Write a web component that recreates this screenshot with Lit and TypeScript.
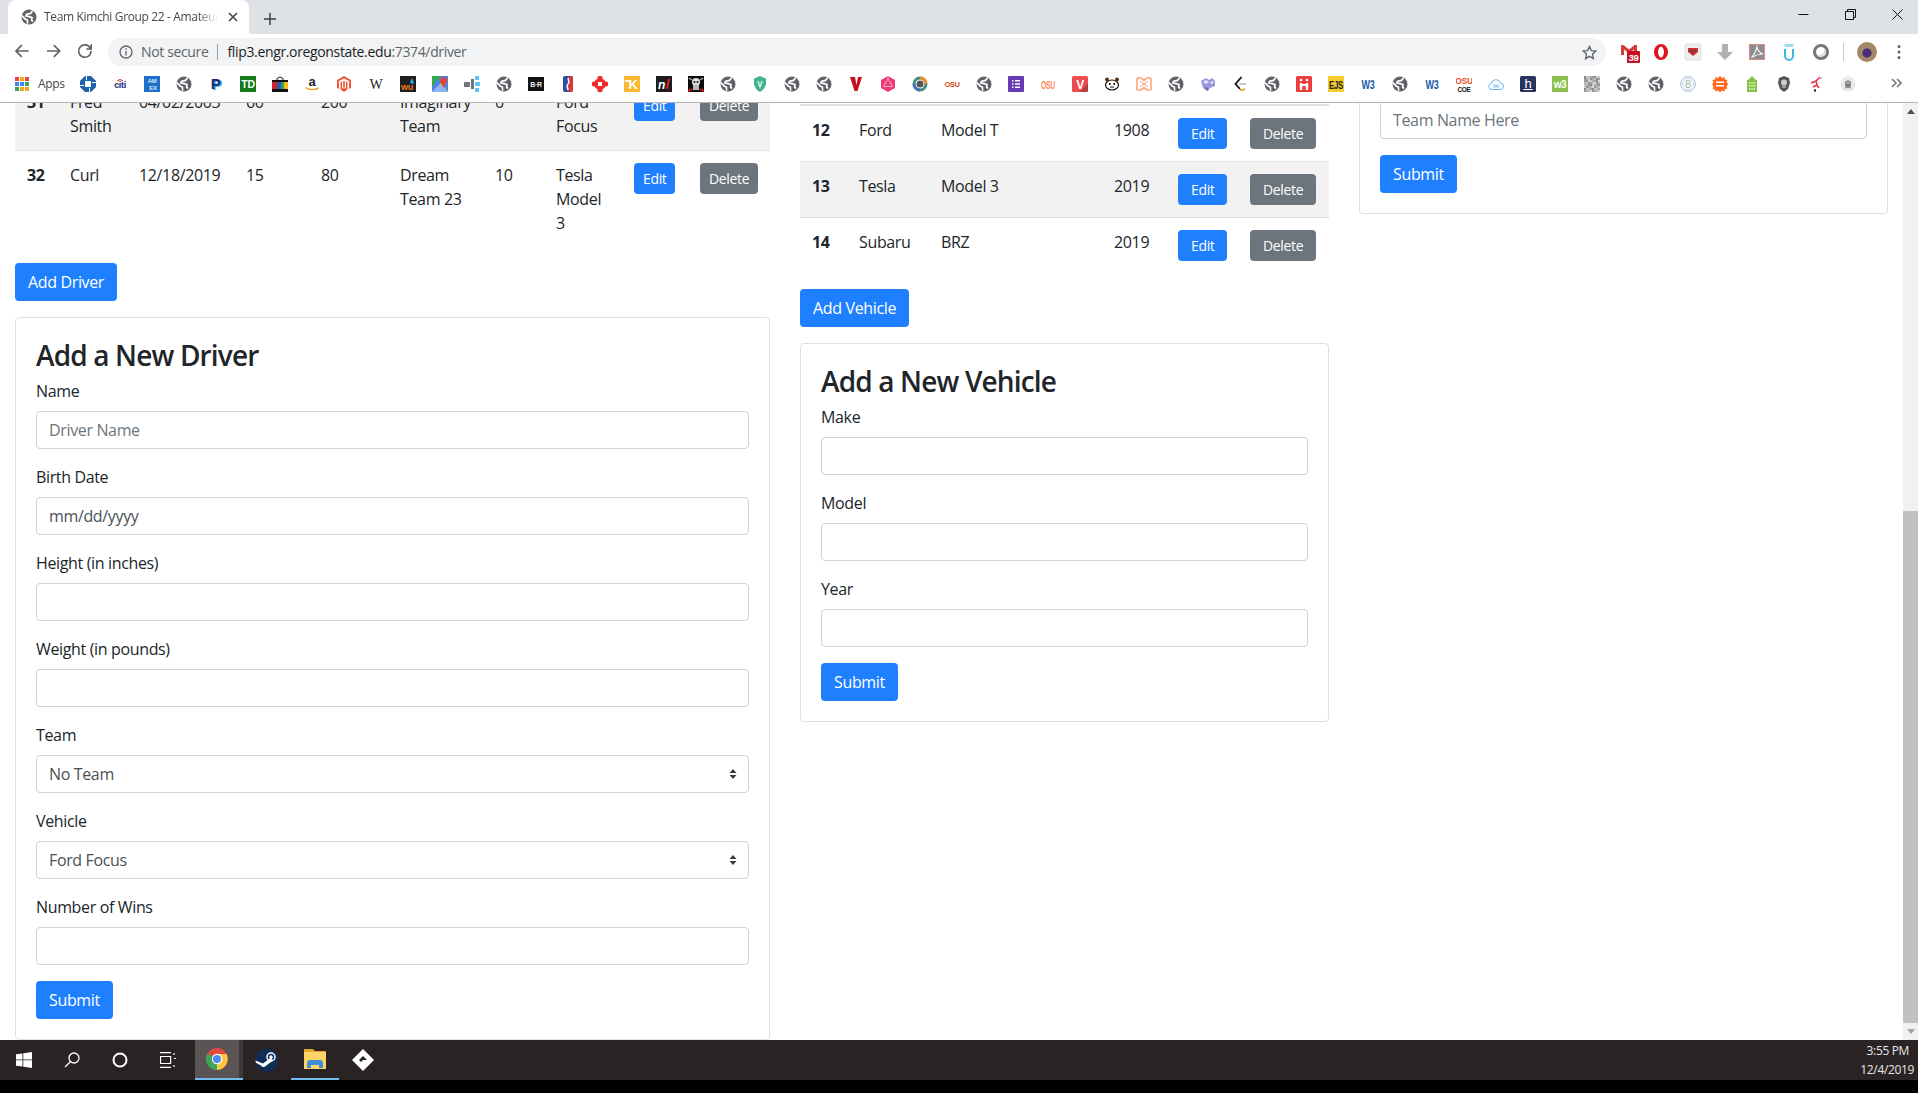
import { LitElement, html, css, svg } from "lit";
import { customElement } from "lit/decorators.js";

const GLOBE = svg`<circle cx="8" cy="8" r="7.5" fill="#5f6368"/><path d="M11.5 1.8 9.6 4.4 5.6 5.2 4.9 6.9 8.2 7.6 11 8.5 10.6 11.2 12 12.6" fill="none" stroke="#fff" stroke-width="1.7"/><path d="M.8 6.6 4.4 10.2 6.4 11 6.6 14.6" fill="none" stroke="#fff" stroke-width="1.7"/>`;

const label = (t: string, x: number, y: number, size: number, fill: string, weight = 700, family = "Liberation Sans") =>
  svg`<text x=${x} y=${y} font-size=${size} fill=${fill} font-weight=${weight} font-family=${family} text-anchor="middle">${t}</text>`;

// grey noise square of the one qr-like favicon
const noise = () => {
  const out = [];
  for (let y = 0; y < 16; y += 2) {
    for (let x = 0; x < 16; x += 2) {
      const v = 130 + ((x * 37 + y * 53 + x * y * 11) % 90);
      out.push(svg`<rect x=${x} y=${y} width="2" height="2" fill="rgb(${v},${v},${v})"/>`);
    }
  }
  return out;
};

const FAVICONS = [
  svg`<path fill="#1c62ad" d="M5 0h6l5 5v6l-5 5H5l-5-5V5z"/><path fill="#fff" d="M5 5h6v6H5zM6 0h1v4H6zM12 6h4v1h-4zM9 12h1v4H9zM0 9h4v1H0z"/>`,
  svg`${label("citi", 8, 12, 9, "#13267b")}<path d="M5 5q3-3 6 0" fill="none" stroke="#d8262c"/>`,
  svg`<rect width="16" height="16" fill="#1d6fc9"/>${label("AM", 8, 7, 6, "#d5e6f7")}${label("EX", 9, 14, 6, "#d5e6f7")}`,
  GLOBE,
  svg`${label("P", 9, 14, 15, "#2a9bdc", 700, "Liberation Sans")}${label("P", 7.5, 13, 15, "#14306f")}`,
  svg`<rect width="16" height="16" fill="#137a1c"/>${label("TD", 8, 12, 10.5, "#fff")}`,
  svg`<path d="M5 4V2.5Q8-.5 11 2.5V4" fill="none" stroke="#111"/><rect y="4" width="16" height="12" fill="#111"/><rect x="0" y="6" width="5" height="7" fill="#d9202e"/><rect x="5" y="6" width="4" height="7" fill="#1b5fb8"/><rect x="9" y="6" width="3" height="7" fill="#3c9e48"/><rect x="12" y="6" width="4" height="7" fill="#f3c11b"/>`,
  svg`${label("a", 8, 10, 13, "#222")}<path d="M1.5 11.5q6 4 13 .5" fill="none" stroke="#f29a1e" stroke-width="1.4"/>`,
  svg`<path fill="#ed5a3c" d="M8 0l7 4v8l-2 1V5L8 2.5 3 5v8l-2-1V4z"/><path fill="#ed5a3c" d="M4.5 6 6 5.2V12l1.2 1V5l.8-.4.8.4V13l1.2-1V5.2l1.5.8v7.4L8 16l-3.500-2.600z"/>`,
  svg`${label("W", 8, 13, 14, "#222", 400, "Liberation Serif")}`,
  svg`<rect width="16" height="16" fill="#1f1f1f"/>${label("wu", 7, 14, 9, "#ef7a1a")}<path fill="#2b9be0" d="M12 2l2 4a2 2 0 1 1-4 0z"/>`,
  svg`<rect width="16" height="16" fill="#4a85ec"/><path fill="#34a853" d="M0 0h9L0 11z"/><path fill="#fbc02d" d="M0 16l9-9 7 9z"/><path fill="#8ab4f8" d="M0 16 8 8l8 8z"/><circle cx="11.500" cy="4.500" r="3.500" fill="#e0463a"/><path fill="#e0463a" d="M8.500 6l3 6 3-6z"/>`,
  svg`<path fill="#6f7478" d="M0 6h6v5H0zM7 3h3v10H7z"/><path fill="#5cc6f3" d="M11 0h4v4h-4zM11 6h5v4h-5zM11 12h4v4h-4z"/>`,
  GLOBE,
  svg`<rect y="1" width="16" height="14" fill="#111"/>${label("B·R", 8, 11, 7, "#eee")}`,
  svg`<rect x="3" y="0" width="10" height="16" rx="2" fill="#2a4fa2"/><rect x="8" y="0" width="5" height="16" rx="2" fill="#d8343c"/><path d="M8 2l1 4-2 4 1 4" fill="none" stroke="#fff" stroke-width="1.500"/>`,
  svg`<g fill="#ee2b2b"><rect x="5.500" y="0" width="5" height="5" rx="1.500"/><rect x="5.500" y="11" width="5" height="5" rx="1.500"/><rect x="0" y="5.500" width="5" height="5" rx="1.500"/><rect x="11" y="5.500" width="5" height="5" rx="1.500"/><rect x="3" y="3" width="10" height="10" rx="3"/></g><rect x="6" y="6" width="4" height="4" fill="#fff"/>`,
  svg`<rect width="16" height="16" fill="#fbb72f"/>${label("K", 9, 13, 13, "#fff")}<rect x="1" y="4" width="6" height="1.800" fill="#fff"/>`,
  svg`<rect width="16" height="16" fill="#1d1d1d"/><text x="2" y="13" font-size="12" font-weight="700" font-style="italic" fill="#fff" font-family="Liberation Sans">n</text><path d="M13 3l-2 10" stroke="#d9252b" stroke-width="2"/>`,
  svg`<rect width="16" height="16" fill="#0c0c0c"/><circle cx="8" cy="6" r="4" fill="#ddd"/><rect x="5" y="9" width="6" height="5" fill="#bbb"/><circle cx="6.500" cy="6" r="1" fill="#111"/><circle cx="9.500" cy="6" r="1" fill="#111"/><path d="M0 15l4-2M16 15l-4-2" stroke="#c01818" stroke-width="2"/><path d="M1 2l3 2M15 2l-3 2" stroke="#eee"/>`,
  GLOBE,
  svg`<path fill="#3fb489" d="M8 0l6 2.500V8q-1 5-6 8-5-3-6-8V2.500z"/><path d="M6 5l2 6 2-6" fill="none" stroke="#d6f3e8" stroke-width="1.400"/>`,
  GLOBE,
  GLOBE,
  svg`<path fill="#c4101e" d="M2 1h5l1.500 8L10 1h4l-4.500 14H6.500z"/>`,
  svg`<path fill="#ee3a78" d="M8 0l7 4v8l-7 4-7-4V4z"/><path d="M8 2.500l4.500 8h-9zM8 2.500V.8" fill="none" stroke="#ffc7da" stroke-width=".8"/>`,
  svg`<circle cx="8" cy="8" r="6" fill="none" stroke="#3f8f7a" stroke-width="3"/><path d="M8 2a6 6 0 0 1 6 6" fill="none" stroke="#ef8a2c" stroke-width="3"/><path d="M8 14a6 6 0 0 1-6-6" fill="none" stroke="#4a6fc0" stroke-width="3"/><circle cx="8" cy="8" r="3.500" fill="#555"/>`,
  svg`${label("OSU", 8, 11, 7.500, "#d9481c")}`,
  GLOBE,
  svg`<rect width="16" height="16" rx="1" fill="#673ab7"/><path d="M4 4h1.500v1.500H4zM7 4h5v1.500H7zM4 7.200h1.500v1.500H4zM7 7.200h5v1.500H7zM4 10.500h1.500V12H4zM7 10.500h5V12H7z" fill="#fff"/>`,
  svg`<text x="8" y="13" font-size="11" font-weight="700" fill="#fb8a5e" font-family="Liberation Sans" text-anchor="middle" textLength="14" lengthAdjust="spacingAndGlyphs">OSU</text>`,
  svg`<rect width="16" height="16" rx="1.500" fill="#ee4b4f"/><path d="M8 16l8-8v6.500a1.500 1.500 0 0 1-1.500 1.500z" fill="#b23c40"/>${label("V", 8, 12.500, 12, "#fff")}`,
  svg`<ellipse cx="8" cy="9" rx="6.500" ry="5" fill="#fff" stroke="#111" stroke-width="1.200"/><circle cx="3" cy="3.500" r="2" fill="#5b3212"/><circle cx="13" cy="3.500" r="2" fill="#5b3212"/><rect x="5" y="7" width="1.500" height="2" fill="#111"/><rect x="9.500" y="7" width="1.500" height="2" fill="#111"/><path d="M6 11h4" stroke="#111"/>`,
  svg`<path d="M1 2.500q3.500-2 7 2 3.500-4 7-2v11q-3.500 2-7-2-3.500 4-7 2z" fill="none" stroke="#fb9a6a" stroke-width="1.400"/><path d="M4 5l4 3 4-3M4 11l4-3 4 3" fill="none" stroke="#fb9a6a"/>`,
  GLOBE,
  svg`<path fill="#9a94dd" d="M1 5l5-3 3 2 3-2 3 3v5l-5 2-2 3-5-3z"/><path fill="#e8e6f8" d="M6 4l3 2-3 2-3-2zM12 5l2 1-2 2-2-1z"/><path fill="#6c66b8" d="M5 11l3 1v3l-3-2z"/>`,
  svg`<path d="M9.500 1 3.500 8l4.500 5" fill="none" stroke="#111" stroke-width="1.800"/><path d="M8 13.500q3 1.500 5-1" fill="none" stroke="#f0a020" stroke-width="1.800"/><path d="M7 8h7" stroke="#bbb" stroke-width="1.600"/>`,
  GLOBE,
  svg`<rect width="16" height="16" rx="1.500" fill="#ee3b3b"/><circle cx="5" cy="4" r="1.300" fill="#fff"/><circle cx="11" cy="4" r="1.300" fill="#fff"/><path d="M3.800 7h2.400v7H3.800zM9.800 7h2.400v7H9.800zM6 8h4v2H6z" fill="#fff"/>`,
  svg`<rect width="16" height="16" fill="#f5cb2e"/><text x="8" y="12.500" font-size="10" font-weight="700" fill="#222" font-family="Liberation Sans" text-anchor="middle" textLength="14" lengthAdjust="spacingAndGlyphs">EJS</text>`,
  svg`<text x="8" y="13" font-size="12" font-weight="700" fill="#1d5da8" font-family="Liberation Sans" text-anchor="middle" textLength="13" lengthAdjust="spacingAndGlyphs">W3</text>`,
  GLOBE,
  svg`<text x="8" y="13" font-size="12" font-weight="700" fill="#1d5da8" font-family="Liberation Sans" text-anchor="middle" textLength="13" lengthAdjust="spacingAndGlyphs">W3</text>`,
  svg`${label("OSU", 8, 8, 8.500, "#e6502a")}${label("COE", 8, 15.500, 6.500, "#111")}`,
  svg`<path d="M4 13.500a3 3 0 0 1-.5-6 4.500 4.500 0 0 1 8.800-.5 3.200 3.200 0 0 1 0 6.500z" fill="#fff" stroke="#6bb1f2"/><circle cx="6.500" cy="10" r="1.300" fill="none" stroke="#6bb1f2" stroke-width=".8"/><circle cx="9.500" cy="10" r="1.300" fill="none" stroke="#6bb1f2" stroke-width=".8"/>`,
  svg`<rect width="16" height="16" rx="1.500" fill="#29335f"/>${label("h", 8, 11.500, 13, "#fff", 400)}<rect x="3.500" y="13" width="9" height="1" fill="#fff"/>`,
  svg`<rect width="16" height="16" fill="#8cc152"/>${label("w3", 8, 12, 10, "#fff")}`,
  svg`${noise()}`,
  GLOBE,
  GLOBE,
  svg`<circle cx="8" cy="8" r="7.300" fill="#fff" stroke="#a6b8d2"/><circle cx="8" cy="8" r="5.500" fill="none" stroke="#d0dae8"/>${label("8", 8, 12, 11, "#8cb9ab", 400)}`,
  svg`<path fill="#ff6a1a" d="M8 0l2 2 2.500-1 .5 2.500 2.500.5-1 2.500 2 1.500-2 2 1 2.500-2.500.5-.5 2.500-2.500-1-2 2-2-2-2.500 1L3 13.500.5 13l1-2.500-1.500-2.500 1.500-1.500L.5 4 3 3.500 3.500 1 6 2z"/><rect x="4" y="5.500" width="8" height="1.500" fill="#fff"/><rect x="4" y="9" width="8" height="1.500" fill="#fff"/>`,
  svg`<path fill="#8bc34a" d="M8 0l4 4v0h1v12H3V4h1z"/><path d="M5 6h1.500v1.500H5zM7.300 6h1.500v1.500H7.300zM9.600 6h1.500v1.500H9.600zM5 9h1.500v1.500H5zM7.300 9h1.500v1.500H7.300zM9.600 9h1.500v1.500H9.600zM5 12h1.500v1.500H5zM7.300 12h1.500v1.500H7.300zM9.600 12h1.500v1.500H9.600z" fill="#dcefc7"/>`,
  svg`<path fill="#555" d="M8 0l5 2 1 5-2 6-4 3-4-3-2-6 1-5z"/><circle cx="8" cy="6.500" r="3" fill="#ccc"/><rect x="6" y="9" width="4" height="3" fill="#999"/>`,
  svg`<path d="M12 1 8 5 3 7M8 5l1 4-4 2M9 9l2 3" fill="none" stroke="#ee2b45" stroke-width="1.500"/><circle cx="12.500" cy="2" r="1.300" fill="#f9a3ad"/><rect x="6" y="13.500" width="2" height="2" fill="#111"/>`,
  svg`<circle cx="8" cy="8" r="7.500" fill="#e8e8e8"/><circle cx="8" cy="7.500" r="3" fill="#777"/><path d="M5 12l6-2M5 10l6 2" stroke="#888"/><circle cx="7" cy="7" r=".8" fill="#eee"/><circle cx="9" cy="7" r=".8" fill="#eee"/>`,
];

const APPS_COLORS = ["#e8453c", "#f3a81e", "#e8453c", "#4285f4", "#4285f4", "#34a853", "#34a853", "#f3a81e", "#f3a81e"];

const EXTENSIONS = [
  svg`<path fill="#d63a3a" d="M0 1h2.500L8 5.500 13.500 1H16v10H13V5.500L8 9.500 3 5.500V11H0z"/><rect x="6" y="7" width="13" height="12" rx="1" fill="#c9101e"/><text x="12.500" y="16.800" font-size="9.500" font-weight="700" fill="#fff" font-family="Liberation Sans" text-anchor="middle">39</text>`,
  svg`<ellipse cx="8" cy="8" rx="7" ry="8" fill="#e0141e"/><ellipse cx="8" cy="8" rx="2.800" ry="5.500" fill="#fff"/><path d="M6 6v4M10 6v4" stroke="#fff" stroke-width="1.200"/>`,
  svg`<rect width="16" height="16" rx="2" fill="#eee" stroke="#ddd"/><path d="M3 4h10v4l-5 4-5-4z" fill="#c9303a"/><path d="M5.500 6 8 8.500 10.500 6" fill="none" stroke="#333"/>`,
  svg`<path fill="#b0b0b0" d="M5 0h6v8h5l-8 8-8-8h5z"/>`,
  svg`<rect x=".5" y=".5" width="15" height="15" fill="#8c8c8c" stroke="#e08a80"/><path d="M2.500 13.500Q6 10 8 3q1.500 6 6 7-5 0-11.500 3.500z" fill="none" stroke="#f2f2f2" stroke-width="1.200"/>`,
  svg`<path d="M4 5v7a4 4 0 0 0 8 0V5" fill="none" stroke="#3fb6e8" stroke-width="2"/><path d="M3.500 0h9v3h-9z" fill="#9fdcf5"/>`,
  svg`<circle cx="8" cy="8" r="6.500" fill="none" stroke="#777" stroke-width="3"/><path d="M5 12q6 1 7-6" fill="none" stroke="#ccc" stroke-width="1.400"/>`,
];

const LEFT_COLS = [43, 69, 107, 75, 79, 95, 61, 78, 66, 82];
const MID_COLS = [47, 82, 173, 64, 72, 91];

@customElement("app-root")
export class AppRoot extends LitElement {
  static styles = css`
    :host {
      display: block;
      width: 1918px;
      height: 1093px;
      overflow: hidden;
      background: #fff;
      font-family: "Open Sans", sans-serif;
      font-size: 16px;
      line-height: 24px;
      color: #212529;
      letter-spacing: -0.022em;
    }
    svg {
      display: block;
    }

    /* browser chrome */
    .tabstrip {
      height: 34px;
      background: #dee1e6;
      display: flex;
      align-items: flex-end;
      position: relative;
    }
    .tab {
      margin-left: 8px;
      width: 241px;
      height: 34px;
      background: #fff;
      border-radius: 8px 8px 0 0;
      display: flex;
      align-items: center;
      padding-left: 13px;
      box-sizing: border-box;
      font-size: 12px;
      color: #45484d;
    }
    .tab-title {
      margin-left: 7px;
      width: 174px;
      white-space: nowrap;
      overflow: hidden;
      -webkit-mask-image: linear-gradient(90deg, #000 88%, transparent);
    }
    .tab-close {
      margin-left: 10px;
    }
    .new-tab {
      margin: 0 0 9px 15px;
    }
    .win {
      margin-left: auto;
      display: flex;
      gap: 36px;
      padding: 0 15px 14px 0;
    }
    .toolbar {
      height: 32px;
      background: #fff;
      display: flex;
      align-items: flex-end;
    }
    .nav {
      display: flex;
      gap: 16px;
      padding: 0 15px 7px 14px;
      box-sizing: border-box;
      width: 108px;
    }
    .omnibox {
      width: 1498px;
      height: 28px;
      background: #f1f3f4;
      border-radius: 14px;
      display: flex;
      align-items: center;
      padding-left: 11px;
      box-sizing: border-box;
      font-size: 14px;
      color: #5f6368;
    }
    .not-secure {
      margin-left: 8px;
    }
    .omni-sep {
      width: 1px;
      height: 16px;
      background: #9aa0a6;
      margin: 0 9px 0 9px;
    }
    .host {
      color: #202124;
    }
    .star {
      margin-left: auto;
      margin-right: 9px;
    }
    .exts {
      display: flex;
      align-items: center;
      height: 28px;
      padding-left: 15px;
      gap: 16px;
    }
    .exts .sep {
      width: 1px;
      height: 18px;
      background: #c8c8c8;
      margin: 0 -3px 0 -2px;
    }
    .avatar {
      width: 20px;
      height: 20px;
      border-radius: 50%;
      background: radial-gradient(circle at 50% 55%, #4a2f7a 0 30%, #a28768 32%);
    }
    .dots {
      margin-left: 4px;
    }
    .bookmarks {
      height: 36px;
      background: #fff;
      display: flex;
      align-items: center;
      border-bottom: 1px solid #b4b4b4;
      box-sizing: content-box;
      position: relative;
    }
    .apps {
      display: grid;
      grid-template-columns: repeat(3, 3.500px);
      gap: 1.600px;
      margin-left: 15px;
      width: 14px;
    }
    .apps i {
      height: 3.500px;
    }
    .apps-label {
      margin-left: 9px;
      width: 34px;
      font-size: 12px;
      color: #45484d;
    }
    .fav {
      width: 32px;
      display: flex;
      justify-content: center;
    }
    .chevrons {
      position: absolute;
      left: 1890px;
      top: 11px;
    }

    /* page */
    .viewport {
      height: 937px;
      display: flex;
      overflow: hidden;
    }
    .columns {
      width: 1903px;
      display: grid;
      grid-template-columns: 785px 559px 559px;
    }
    .col {
      padding: 0 15px;
    }
    .col-left {
      margin-top: -26px;
    }
    .col-mid {
      padding-top: 1px;
    }
    .col-right {
      margin-top: -2px;
    }
    table {
      table-layout: fixed;
      border-collapse: separate;
      border-spacing: 0;
      width: 100%;
      margin-bottom: 16px;
    }
    th {
      height: 0;
      padding: 0;
      border-bottom: 1px solid #dee2e6;
    }
    td {
      padding: 12px;
      border-top: 1px solid #dee2e6;
      vertical-align: top;
    }
    td.num {
      font-weight: 700;
    }
    tr.odd td {
      background: #f2f2f2;
    }
    .col-left td.act {
      padding-right: 0;
    }
    .col-left td.act + td.act {
      padding-left: 12px;
      padding-right: 12px;
    }
    .col-mid td.act {
      padding-right: 0;
    }
    .btn {
      display: inline-block;
      font: inherit;
      letter-spacing: inherit;
      border: 1px solid transparent;
      border-radius: 4px;
      color: #fff;
      background: #1f80ff;
      height: 38px;
      padding: 0 12px;
      box-sizing: border-box;
      cursor: pointer;
    }
    .btn-sm {
      height: 31px;
      font-size: 14px;
      line-height: 21px;
      padding: 0 8px;
    }
    .col-mid .btn-sm {
      padding: 0 12px;
    }
    .btn-gray {
      background: #6c757d;
    }
    .card {
      margin-top: 16px;
      border: 1px solid #dfdfdf;
      border-radius: 4px;
      padding: 20px;
    }
    .card.clipped {
      margin-top: 0;
      padding-top: 0;
      border-top: none;
      border-radius: 0 0 4px 4px;
    }
    h3 {
      margin: 0 0 8px;
      height: 33px;
      font-size: 28px;
      line-height: 35px;
      font-weight: 600;
      letter-spacing: -0.03em;
    }
    .group {
      margin-bottom: 16px;
    }
    label {
      display: block;
      margin-bottom: 8px;
    }
    .control {
      display: block;
      width: 100%;
      height: 38px;
      box-sizing: border-box;
      border: 1px solid #ced4da;
      border-radius: 4px;
      padding: 6px 12px;
      font: inherit;
      letter-spacing: inherit;
      color: #495057;
      background: #fff;
      appearance: none;
    }
    .control::placeholder {
      color: #6c757d;
      opacity: 1;
    }
    .select-wrap {
      position: relative;
    }
    .select-arrow {
      position: absolute;
      right: 12px;
      top: 14px;
      pointer-events: none;
    }

    /* scrollbar */
    .scrollbar {
      width: 15px;
      background: #f1f1f1;
      position: relative;
    }
    .thumb {
      position: absolute;
      left: 0;
      right: 0;
      top: 408px;
      height: 512px;
      background: #c1c1c1;
    }
    .arrow-up {
      position: absolute;
      top: 6px;
      left: 4px;
    }
    .arrow-down {
      position: absolute;
      bottom: 6px;
      left: 4px;
    }

    /* taskbar */
    .taskbar {
      height: 40px;
      background: #2a2324;
      display: flex;
      align-items: center;
      position: relative;
    }
    .task {
      width: 48px;
      height: 40px;
      display: flex;
      align-items: center;
      justify-content: center;
      box-sizing: border-box;
      flex: none;
    }
    .task.active {
      margin-left: 3px;
      background: linear-gradient(90deg, #5a5554 0 44px, #3d3837 44px);
      border-bottom: 2px solid #76b9ed;
      padding-right: 4px;
    }
    .task.open {
      border-bottom: 2px solid #76b9ed;
    }
    .clock {
      margin-left: auto;
      padding-right: 4px;
      text-align: right;
      font-size: 12px;
      line-height: 19px;
      color: #e6e6e6;
    }
    .clock div:first-child {
      padding-right: 5px;
    }
    .blackbar {
      height: 13px;
      background: #000;
    }
  `;

  private nav(d: string) {
    return svg`<svg width="16" height="16" viewBox="0 0 16 16" fill="none" stroke="#5f6368" stroke-width="1.700">${svg`<path d=${d}/>`}</svg>`;
  }

  private chromeBar() {
    return html`
      <div class="tabstrip">
        <div class="tab">
          <svg width="16" height="16" viewBox="0 0 16 16">${GLOBE}</svg>
          <span class="tab-title">Team Kimchi Group 22 - Amateur Racing</span>
          <svg class="tab-close" width="10" height="10" viewBox="0 0 10 10"><path d="M1 1l8 8M9 1 1 9" stroke="#45484d" stroke-width="1.700"/></svg>
        </div>
        <svg class="new-tab" width="12" height="12" viewBox="0 0 12 12"><path d="M6 0v12M0 6h12" stroke="#3c4043" stroke-width="1.500"/></svg>
        <div class="win">
          <svg width="11" height="11" viewBox="0 0 11 11"><path d="M.5 5.500h10" stroke="#111"/></svg>
          <svg width="11" height="11" viewBox="0 0 11 11" fill="none" stroke="#111"><path d="M.5 2.500h8v8h-8zM2.500 2.500v-2h8v8h-2"/></svg>
          <svg width="11" height="11" viewBox="0 0 11 11"><path d="M.5.500l10 10M10.500.500l-10 10" stroke="#111"/></svg>
        </div>
      </div>
      <div class="toolbar">
        <div class="nav">
          ${this.nav("M15 8H2M8 2 2 8l6 6")}
          ${this.nav("M1 8h13M8 2l6 6-6 6")}
          ${this.nav("M13.500 5A6.300 6.300 0 1 0 14.300 8M14.500 1v5h-5")}
        </div>
        <div class="omnibox">
          <svg width="14" height="14" viewBox="0 0 14 14" fill="none" stroke="#5f6368" stroke-width="1.300"><circle cx="7" cy="7" r="6"/><path d="M7 6v4.500M7 3.200v1.500"/></svg>
          <span class="not-secure">Not secure</span>
          <span class="omni-sep"></span>
          <span class="host">flip3.engr.oregonstate.edu</span><span>:7374/driver</span>
          <svg class="star" width="15" height="15" viewBox="0 0 16 16"><path d="M8 1.500l2 4.500 4.800.5-3.600 3.200 1 4.800L8 12.100 3.800 14.500l1-4.800L1.200 6.500 6 6z" fill="none" stroke="#5f6368" stroke-width="1.400"/></svg>
        </div>
        <div class="exts">
          ${EXTENSIONS.map((e) => html`<svg width="16" height="16" viewBox="0 0 16 16" overflow="visible">${e}</svg>`)}
          <span class="sep"></span>
          <span class="avatar"></span>
          <svg class="dots" width="4" height="16" viewBox="0 0 4 16" fill="#5f6368"><circle cx="2" cy="2.500" r="1.500"/><circle cx="2" cy="8" r="1.500"/><circle cx="2" cy="13.500" r="1.500"/></svg>
        </div>
      </div>
      <div class="bookmarks">
        <div class="apps">${APPS_COLORS.map((c) => html`<i style="background:${c}"></i>`)}</div>
        <span class="apps-label">Apps</span>
        ${FAVICONS.map((f) => html`<span class="fav"><svg width="16" height="16" viewBox="0 0 16 16">${f}</svg></span>`)}
        <svg class="chevrons" width="12" height="12" viewBox="0 0 12 12" fill="none" stroke="#777" stroke-width="1.600"><path d="M2 2l4 4-4 4M7 2l4 4-4 4"/></svg>
      </div>
    `;
  }

  private row(cells: string[], odd = false) {
    return html`<tr class=${odd ? "odd" : ""}>
      ${cells.map((c, i) => html`<td class=${i === 0 ? "num" : ""}>${c}</td>`)}
      <td class="act"><button class="btn btn-sm">Edit</button></td>
      <td class="act"><button class="btn btn-sm btn-gray">Delete</button></td>
    </tr>`;
  }

  private field(name: string, placeholder = "", value = "") {
    return html`<div class="group">
      <label>${name}</label>
      <input class="control" placeholder=${placeholder} .value=${value} />
    </div>`;
  }

  private selectField(name: string, option: string) {
    return html`<div class="group">
      <label>${name}</label>
      <div class="select-wrap">
        <select class="control"><option>${option}</option></select>
        <svg class="select-arrow" width="8" height="10" viewBox="0 0 8 10" fill="#343a40"><path d="M4 0l3.500 4h-7zM4 10 .5 6h7z"/></svg>
      </div>
    </div>`;
  }

  private taskbar() {
    return html`<div class="taskbar">
      <div class="task">
        <svg width="16" height="16" viewBox="0 0 16 16" fill="#fff"><path d="M0 2.300 6.500 1.400V7.500H0zM7.300 1.300 16 0V7.500H7.300zM0 8.300H6.500V14.600L0 13.700zM7.300 8.300H16V16L7.300 14.700z"/></svg>
      </div>
      <div class="task">
        <svg width="16" height="16" viewBox="0 0 16 16" fill="none" stroke="#fff" stroke-width="1.300"><circle cx="10" cy="6" r="5"/><path d="M6.500 9.500 1 15"/></svg>
      </div>
      <div class="task">
        <svg width="16" height="16" viewBox="0 0 16 16" fill="none" stroke="#fff" stroke-width="2"><circle cx="8" cy="8" r="6.500"/></svg>
      </div>
      <div class="task">
        <svg width="16" height="16" viewBox="0 0 16 16" fill="none" stroke="#fff" stroke-width="1.200"><path d="M0 .6h11M0 15.400h11M.6 4.500h10v7H.6zM14 1v2M14 6.500h2M14 13v2"/></svg>
      </div>
      <div class="task active">
        <svg width="24" height="24" viewBox="0 0 24 24">
          <circle cx="12" cy="12" r="11" fill="#dd4b3e"/>
          <path d="M12 12 2.500 17.500A11 11 0 0 0 12 23z" fill="#3aa757"/>
          <path d="M12 7h9.500A11 11 0 0 1 12 23z" fill="#fdc63f"/>
          <path d="M12 12 2.500 17.500A11 11 0 0 1 2.500 6.500z" fill="#3aa757"/>
          <circle cx="12" cy="12" r="5.200" fill="#fff"/>
          <circle cx="12" cy="12" r="4" fill="#4a8bf5"/>
        </svg>
      </div>
      <div class="task">
        <svg width="24" height="24" viewBox="0 0 24 24">
          <circle cx="12" cy="12" r="11.500" fill="#0f2d57"/>
          <path d="M.5 12.500 8 15.500l8-6 2 3-8 6a3 3 0 0 1-4-1L.8 14.800z" fill="#fff"/>
          <circle cx="16" cy="9" r="4" fill="none" stroke="#fff" stroke-width="1.500"/>
          <circle cx="16" cy="9" r="1.800" fill="#fff"/>
        </svg>
      </div>
      <div class="task open">
        <svg width="24" height="22" viewBox="0 0 24 22">
          <path d="M1 2a1 1 0 0 1 1-1h8l2 2h10a1 1 0 0 1 1 1v3H1z" fill="#e8a82c"/>
          <rect x="1" y="4" width="22" height="17" fill="#fcd468"/>
          <path d="M4 20v-6l2-2h12l2 2v6h-4v-3H8v3z" fill="#3c8fd6"/>
        </svg>
      </div>
      <div class="task">
        <svg width="22" height="22" viewBox="0 0 22 22"><path d="M11 0 22 11 11 22 0 11z" fill="#fff"/><path d="M11 7 15 11H11L9 13 7 11z" fill="#2a2324"/></svg>
      </div>
      <div class="clock">
        <div>3:55 PM</div>
        <div>12/4/2019</div>
      </div>
    </div>`;
  }

  render() {
    return html`
      ${this.chromeBar()}
      <div class="viewport">
        <div class="columns">
          <div class="col col-left">
            <table>
              <colgroup>${LEFT_COLS.map((w) => html`<col style="width:${w}px" />`)}</colgroup>
              <tbody>
                ${this.row(["31", "Fred Smith", "04/02/2003", "60", "200", "Imaginary Team", "0", "Ford Focus"], true)}
                ${this.row(["32", "Curl", "12/18/2019", "15", "80", "Dream Team 23", "10", "Tesla Model 3"])}
              </tbody>
            </table>
            <button class="btn">Add Driver</button>
            <div class="card">
              <h3>Add a New Driver</h3>
              ${this.field("Name", "Driver Name")}
              ${this.field("Birth Date", "", "mm/dd/yyyy")}
              ${this.field("Height (in inches)")}
              ${this.field("Weight (in pounds)")}
              ${this.selectField("Team", "No Team")}
              ${this.selectField("Vehicle", "Ford Focus")}
              ${this.field("Number of Wins")}
              <button class="btn">Submit</button>
            </div>
          </div>
          <div class="col col-mid">
            <table>
              <colgroup>${MID_COLS.map((w) => html`<col style="width:${w}px" />`)}</colgroup>
              <thead><tr>${MID_COLS.map(() => html`<th></th>`)}</tr></thead>
              <tbody>
                ${this.row(["12", "Ford", "Model T", "1908"])}
                ${this.row(["13", "Tesla", "Model 3", "2019"], true)}
                ${this.row(["14", "Subaru", "BRZ", "2019"])}
              </tbody>
            </table>
            <button class="btn">Add Vehicle</button>
            <div class="card">
              <h3>Add a New Vehicle</h3>
              ${this.field("Make")}
              ${this.field("Model")}
              ${this.field("Year")}
              <button class="btn">Submit</button>
            </div>
          </div>
          <div class="col col-right">
            <div class="card clipped">
              <div class="group"><input class="control" placeholder="Team Name Here" /></div>
              <button class="btn">Submit</button>
            </div>
          </div>
        </div>
        <div class="scrollbar">
          <svg class="arrow-up" width="8" height="5" viewBox="0 0 8 5" fill="#505050"><path d="M4 0l4 5H0z"/></svg>
          <div class="thumb"></div>
          <svg class="arrow-down" width="8" height="5" viewBox="0 0 8 5" fill="#a3a3a3"><path d="M0 0h8L4 5z"/></svg>
        </div>
      </div>
      ${this.taskbar()}
      <div class="blackbar"></div>
    `;
  }
}
